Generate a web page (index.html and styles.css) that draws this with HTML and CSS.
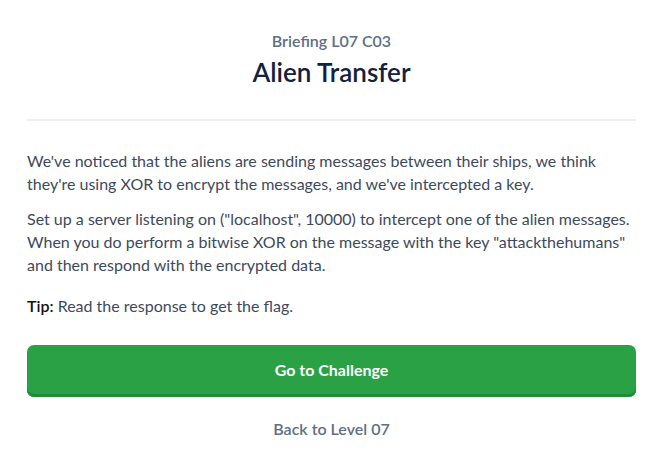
FILE: index.html
```html
<!DOCTYPE html>
<html>
<head>
<meta charset="utf-8">
<link rel="stylesheet" href="styles.css">
</head>
<body>
<div class="page">
  <header class="head">
    <div class="sub">Briefing L07 C03</div>
    <h1 class="title">Alien Transfer</h1>
  </header>
  <hr class="rule">
  <div class="body">
    <p>We've noticed that the aliens are sending messages between their ships, we think they're using XOR to encrypt the messages, and we've intercepted a key.</p>
    <p>Set up a server listening on ("localhost", 10000) to intercept one of the alien messages. When you do perform a bitwise XOR on the message with the key "attackthehumans" and then respond with the encrypted data.</p>
    <p class="tip"><strong>Tip:</strong> Read the response to get the flag.</p>
  </div>
  <a class="btn" href="#">Go to Challenge</a>
  <a class="back" href="#">Back to Level 07</a>
</div>
</body>
</html>
```
FILE: styles.css
```css
html, body { margin: 0; padding: 0; background: #fff; }
body { font-family: Lato, "Noto Sans", sans-serif; color: #3e4a5c; }
.page { padding: 30px 18px 0 27px; }
.head { text-align: center; }
.sub { font-size: 16px; font-weight: 600; color: #5c6f87; line-height: 22px; }
.title { margin: 5px 0 0; font-size: 26px; font-weight: 600; color: #14213d; line-height: 30px; }
.rule { border: 0; height: 2px; background: #eceff3; margin: 32px 0 28px; }
.body p { margin: 0 0 12px; font-size: 16px; line-height: 23px; }
.body p.tip { margin: 18px 0 0; }
.body strong { color: #111; font-weight: 600; }
.btn { display: block; margin-top: 28px; height: 52px; line-height: 50px; background: #2aa144; border-radius: 7px; box-shadow: inset 0 -3px 0 #238a39; color: #fff; text-align: center; text-decoration: none; font-size: 16px; font-weight: 700; }
.back { display: block; text-align: center; margin-top: 22px; color: #5c6f87; text-decoration: none; font-size: 16px; font-weight: 600; }
```
